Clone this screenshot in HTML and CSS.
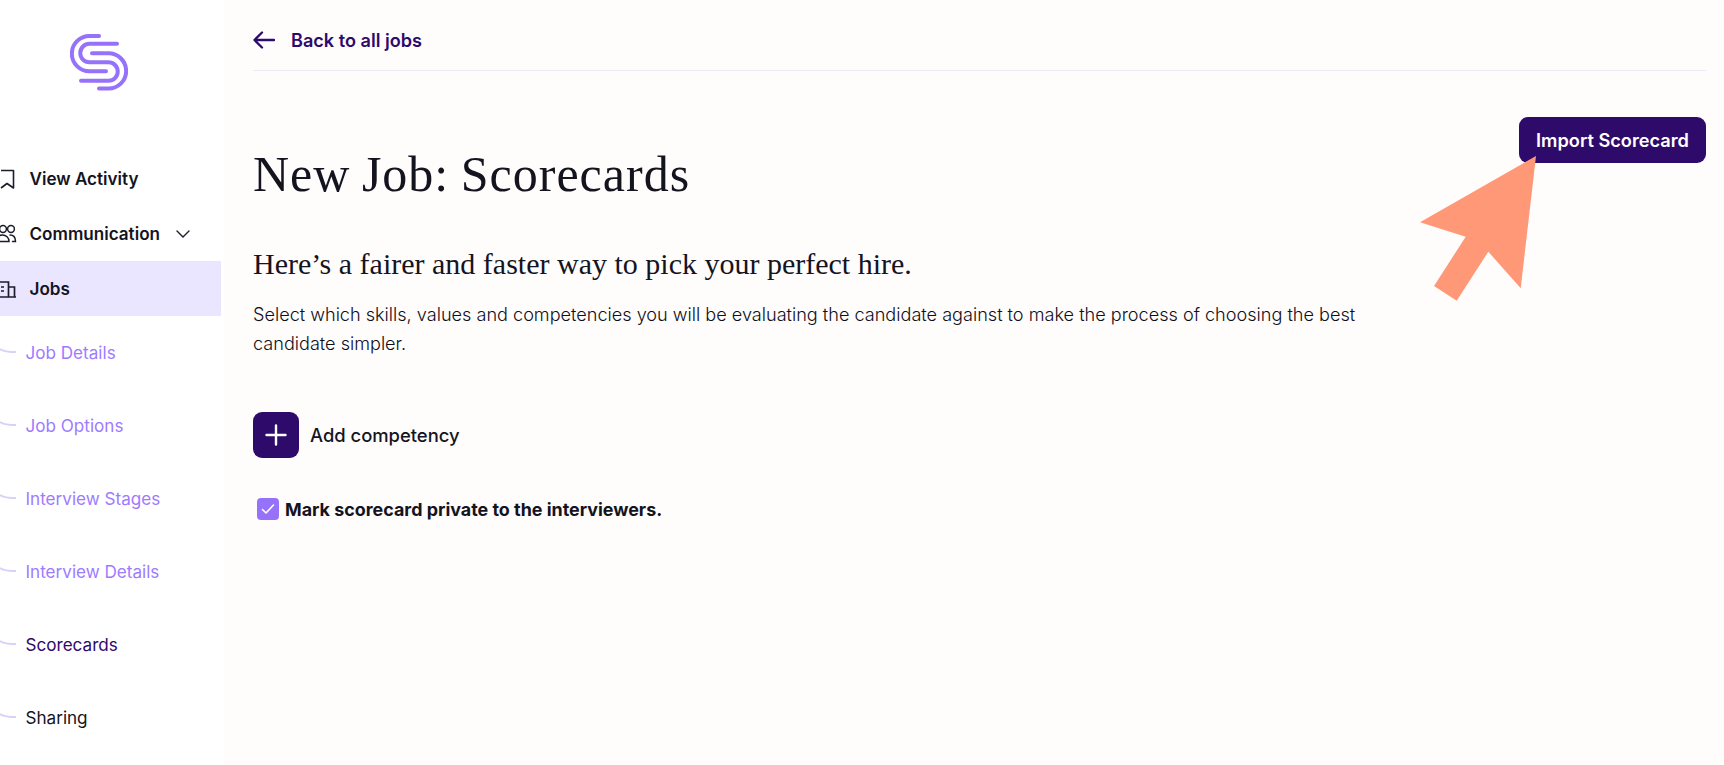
FILE: index.html
```html
<!DOCTYPE html>
<html lang="en">
<head>
<meta charset="utf-8">
<title>New Job: Scorecards</title>
<link rel="stylesheet" href="styles.css">
</head>
<body>
<div class="app">
  <aside class="sidebar">
    <div class="logo">
      <svg width="58" height="58" viewBox="0 0 58 58" fill="none" stroke="#9672fb" stroke-width="4" stroke-linecap="round">
        <path d="M29 3H19.500a17.650 17.650 0 0 0 0 35.300H36"/>
        <path d="M47 10.800H19.500a9.250 9.250 0 0 0 0 18.500H38.500a9.250 9.250 0 0 1 0 18.500H11"/>
        <path d="M29 55.600H38.500a17.650 17.650 0 0 0 0-35.300H22"/>
      </svg>
    </div>
    <nav class="nav">
      <a class="nav-item">
        <svg class="nav-icon" width="29.500" height="20" viewBox="0 0 29.500 20" fill="none" stroke="#1c1c2b" stroke-width="1.600" stroke-linejoin="round"><path d="M1 1.500H13.500V19L7 14.500 1 19"/></svg>
        <span>View Activity</span>
      </a>
      <a class="nav-item">
        <svg class="nav-icon" width="29.500" height="20" viewBox="0 0 29.500 20" fill="none" stroke="#1c1c2b" stroke-width="1.500" stroke-linecap="round"><circle cx="3" cy="5" r="3.400"/><circle cx="11" cy="5" r="3.400"/><path d="M-3 17.500c0-4 2-6.500 5.500-6.500s6.500 2.500 6.500 6.500zM10 11c3 0 5.500 2 5.500 6.500h-3"/></svg>
        <span>Communication</span>
        <svg class="chevron" width="16" height="10" viewBox="0 0 16 10" fill="none" stroke="#1c1c2b" stroke-width="1.400" stroke-linecap="round"><path d="M2 2l6 6 6-6"/></svg>
      </a>
      <a class="nav-item active">
        <svg class="nav-icon" width="29.500" height="20" viewBox="0 0 29.500 20" fill="none" stroke="#1c1c2b" stroke-width="1.700"><path d="M-2 18V3H8.500V18M8.500 8H14.500V18M-2 18H16M1 8H4M1 12H4"/></svg>
        <span>Jobs</span>
      </a>
    </nav>
    <ul class="steps">
      <li class="step done"><svg class="curve" width="26" height="12" viewBox="0 0 26 12" fill="none" stroke="#d8d2f8" stroke-width="2"><path d="M0 3c3 2 7 3 16 3"/></svg>Job Details</li>
      <li class="step done"><svg class="curve" width="26" height="12" viewBox="0 0 26 12" fill="none" stroke="#d8d2f8" stroke-width="2"><path d="M0 3c3 2 7 3 16 3"/></svg>Job Options</li>
      <li class="step done"><svg class="curve" width="26" height="12" viewBox="0 0 26 12" fill="none" stroke="#d8d2f8" stroke-width="2"><path d="M0 3c3 2 7 3 16 3"/></svg>Interview Stages</li>
      <li class="step done"><svg class="curve" width="26" height="12" viewBox="0 0 26 12" fill="none" stroke="#d8d2f8" stroke-width="2"><path d="M0 3c3 2 7 3 16 3"/></svg>Interview Details</li>
      <li class="step current"><svg class="curve" width="26" height="12" viewBox="0 0 26 12" fill="none" stroke="#d8d2f8" stroke-width="2"><path d="M0 3c3 2 7 3 16 3"/></svg>Scorecards</li>
      <li class="step"><svg class="curve" width="26" height="12" viewBox="0 0 26 12" fill="none" stroke="#d8d2f8" stroke-width="2"><path d="M0 3c3 2 7 3 16 3"/></svg>Sharing</li>
    </ul>
  </aside>
  <main class="main">
    <header class="topbar">
      <svg class="back-arrow" width="22" height="18" viewBox="0 0 22 18" fill="none" stroke="#2e0a6b" stroke-width="2.300" stroke-linecap="round" stroke-linejoin="round"><path d="M21 9H1.500M9 1.500L1.500 9 9 16.500"/></svg>
      <a class="back-link">Back to all jobs</a>
    </header>
    <section class="content">
      <div class="title-row">
        <h1 class="title">New Job: Scorecards</h1>
        <button class="import">Import Scorecard</button>
      </div>
      <h2 class="subtitle">Here’s a fairer and faster way to pick your perfect hire.</h2>
      <p class="lead">Select which skills, values and competencies you will be evaluating the candidate against to make the process of choosing the best candidate simpler.</p>
      <div class="add">
        <span class="add-btn"><svg width="22" height="22" viewBox="0 0 22 22" fill="none" stroke="#fff" stroke-width="2.400" stroke-linecap="round"><path d="M11 1.500V20.500M1.500 11H20.500"/></svg></span>
        <span class="add-label">Add competency</span>
      </div>
      <label class="private">
        <span class="check"><svg width="14" height="12" viewBox="0 0 14 12" fill="none" stroke="#fff" stroke-width="1.600" stroke-linecap="round" stroke-linejoin="round"><path d="M1.500 6.500L5 10 12.500 2"/></svg></span>
        <span>Mark scorecard private to the interviewers.</span>
      </label>
    </section>
  </main>
</div>
<svg class="pointer" width="120" height="150" viewBox="0 0 120 150"><polygon fill="#ff9877" points="116,6 100.700,138.300 68.300,101.700 36.700,150.700 14,136 45.700,86.700 0,72.300"/></svg>
</body>
</html>
```
FILE: styles.css
```css
* { box-sizing: border-box; }
html, body { margin: 0; height: 100%; overflow: hidden; }
body { font-family: Inter, "Liberation Sans", sans-serif; color: #14141f; background: #fffcfc; }
.app { display: flex; height: 765px; }
.sidebar { width: 224px; flex: none; background: #fff; }
.logo { padding: 33px 0 0 70px; height: 151px; }
.logo svg { display: block; }
.nav { width: 221px; display: flex; flex-direction: column; }
.nav-item { display: flex; align-items: center; height: 55px; font-size: 17.100px; font-weight: 600; }
.nav-item.active { background: #ebe6ff; }
.nav-icon { flex: none; }
.chevron { margin-left: 15px; }
.steps { list-style: none; margin: -0.500px 0 0; padding: 0; }
.step { display: flex; align-items: center; height: 73px; font-size: 17.100px; }
.step.done { color: #9d7bff; }
.step.current { color: #2e0a6b; }
.curve { flex: none; margin-right: -0.500px; }
.main { flex: 1; min-width: 0; padding: 0 18px 0 29px; }
.topbar { height: 71px; display: flex; align-items: center; border-bottom: 1px solid #ece9f2; padding-top: 10px; }
.back-arrow { margin-right: 16px; flex: none; }
.back-link { font-size: 18.100px; font-weight: 600; color: #2e0a6b; }
.content { padding-top: 46px; position: relative; }
.title-row { display: flex; justify-content: space-between; align-items: flex-start; }
.title { margin: 0; font-family: "Liberation Serif", serif; font-weight: 400; font-size: 50px; line-height: 60px; letter-spacing: 1px; word-spacing: -2px; padding-top: 27px; }
.import { width: 187px; height: 46px; background: #2e0a6b; color: #fff; border: 0; border-radius: 9px; font: 600 18.200px Inter, sans-serif; padding: 0; }
.subtitle { margin: 42px 0 0; font-family: "Liberation Serif", serif; font-weight: 400; font-size: 30px; line-height: 36px; }
.lead { margin: 18px 0 0; width: 1130px; font-size: 18.100px; line-height: 28.600px; font-weight: 350; color: #0f0f1a; }
.add { display: flex; align-items: center; margin-top: 55px; }
.add-btn { width: 46px; height: 46px; border-radius: 9px; background: #2e0a6b; display: flex; align-items: center; justify-content: center; }
.add-label { margin-left: 11px; font-size: 18.400px; font-weight: 450; }
.private { display: flex; align-items: center; margin: 40px 0 0 4px; font-size: 17.900px; font-weight: 700; }
.check { width: 22px; height: 22px; border-radius: 4px; background: #9672fb; display: flex; align-items: center; justify-content: center; margin-right: 6px; }
.pointer { position: absolute; left: 1420px; top: 150px; overflow: visible; }
```
